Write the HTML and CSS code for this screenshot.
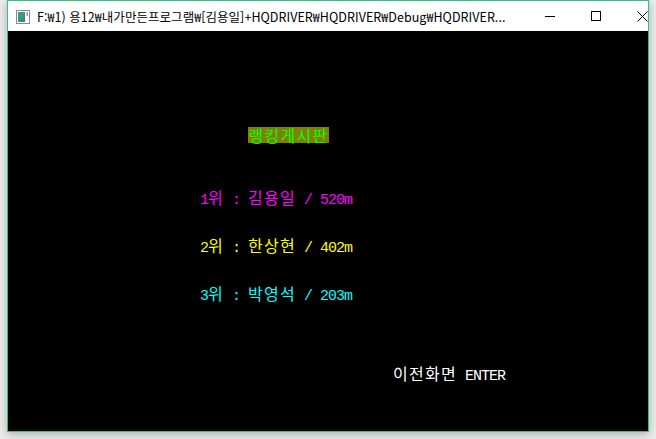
FILE: index.html
```html
<!DOCTYPE html>
<html lang="ko">
<head>
<meta charset="utf-8">
<title>HQDRIVER</title>
<link rel="stylesheet" href="styles.css">
</head>
<body>
<div class="window">
  <div class="titlebar">
    <svg class="app-icon" width="14" height="14" viewBox="0 0 14 14">
      <defs>
        <linearGradient id="g" x1="0" y1="0" x2="1" y2="1">
          <stop offset="0" stop-color="#4a8fa0"/>
          <stop offset="0.6" stop-color="#2f9f7a"/>
          <stop offset="1" stop-color="#6a4fa8"/>
        </linearGradient>
      </defs>
      <rect x="0.5" y="0.5" width="13" height="13" fill="#fff" stroke="#8a8a8a"/>
      <rect x="2" y="2" width="7" height="10" fill="url(#g)"/>
      <rect x="10.5" y="2" width="1.5" height="4" fill="#9a9a9a"/>
    </svg>
    <div class="title">F:₩1) 용12₩내가만든프로그램₩[김용일]+HQDRIVER₩HQDRIVER₩Debug₩HQDRIVER...</div>
    <div class="controls">
      <div class="btn"><svg width="10" height="10" viewBox="0 0 10 10"><path d="M0 5.5H10" stroke="#000" stroke-width="1"/></svg></div>
      <div class="btn"><svg width="10" height="10" viewBox="0 0 10 10"><rect x="0.5" y="0.5" width="9" height="9" fill="none" stroke="#000" stroke-width="1"/></svg></div>
      <div class="btn"><svg width="11" height="11" viewBox="0 0 11 11"><path d="M0.5 0.5L10.5 10.5M10.5 0.5L0.5 10.5" stroke="#000" stroke-width="1"/></svg></div>
    </div>
  </div>
  <div class="console">
    <div class="line heading"><span class="hl"><span class="ko">랭킹게시판</span></span></div>
    <div class="line rank first magenta"><span class="en">1</span><span class="ko">위</span><span class="en"> : </span><span class="ko">김용일</span><span class="en"> / 520m</span></div>
    <div class="line rank yellow"><span class="en">2</span><span class="ko">위</span><span class="en"> : </span><span class="ko">한상현</span><span class="en"> / 402m</span></div>
    <div class="line rank cyan"><span class="en">3</span><span class="ko">위</span><span class="en"> : </span><span class="ko">박영석</span><span class="en"> / 203m</span></div>
    <div class="line enter white"><span class="ko">이전화면</span><span class="en"> ENTER</span></div>
  </div>
</div>
</body>
</html>
```

FILE: styles.css
```css
html, body {
  margin: 0;
  padding: 0;
}
body {
  width: 656px;
  height: 439px;
  background: #ececec;
  overflow: hidden;
  padding-left: 7px;
  box-sizing: border-box;
}
.window {
  width: 642px;
  height: 432px;
  box-sizing: border-box;
  border: 1px solid #2cc57a;
  background: #fff;
  box-shadow: 0 2px 9px rgba(0, 0, 0, 0.28);
  display: flex;
  flex-direction: column;
}
.titlebar {
  height: 30px;
  display: flex;
  align-items: center;
  background: #fff;
  flex-shrink: 0;
}
.app-icon {
  margin-left: 8px;
  margin-top: 1px;
  flex-shrink: 0;
}
.title {
  margin-left: 7px;
  font-family: "Noto Sans CJK KR", "Noto Sans", sans-serif;
  font-size: 12.5px;
  letter-spacing: 0.05px;
  color: #000;
  white-space: nowrap;
  overflow: hidden;
  width: 490px;
  flex-shrink: 0;
}
.controls {
  margin-left: auto;
  display: flex;
  height: 30px;
}
.btn {
  width: 46px;
  height: 30px;
  display: flex;
  align-items: center;
  justify-content: center;
}
.console {
  flex: 1;
  background: #000;
  padding-top: 96px;
  display: flex;
  flex-direction: column;
}
.line {
  height: 16px;
  line-height: 16px;
  white-space: pre;
  display: flex;
  align-items: baseline;
}
.ko {
  font-family: "Noto Sans CJK KR", sans-serif;
  font-size: 16px;
  letter-spacing: 1.28px;
  font-weight: 400;
  line-height: 16px;
}
.en {
  font-family: "Liberation Mono", "DejaVu Sans Mono", monospace;
  font-size: 15px;
  letter-spacing: -1px;
  line-height: 16px;
}
.heading {
  padding-left: 240px;
  align-items: center;
}
.hl {
  background: #808000;
  color: #00ff00;
  height: 16px;
  display: inline-flex;
  align-items: center;
  justify-content: center;
  width: 81px;
}
.rank {
  padding-left: 192px;
  margin-top: 32px;
}
.rank.first {
  margin-top: 46px;
}
.enter {
  padding-left: 385px;
  margin-top: 64px;
}
.magenta { color: #ff00ff; }
.yellow { color: #ffff00; }
.cyan { color: #00ffff; }
.white { color: #ffffff; }
```
